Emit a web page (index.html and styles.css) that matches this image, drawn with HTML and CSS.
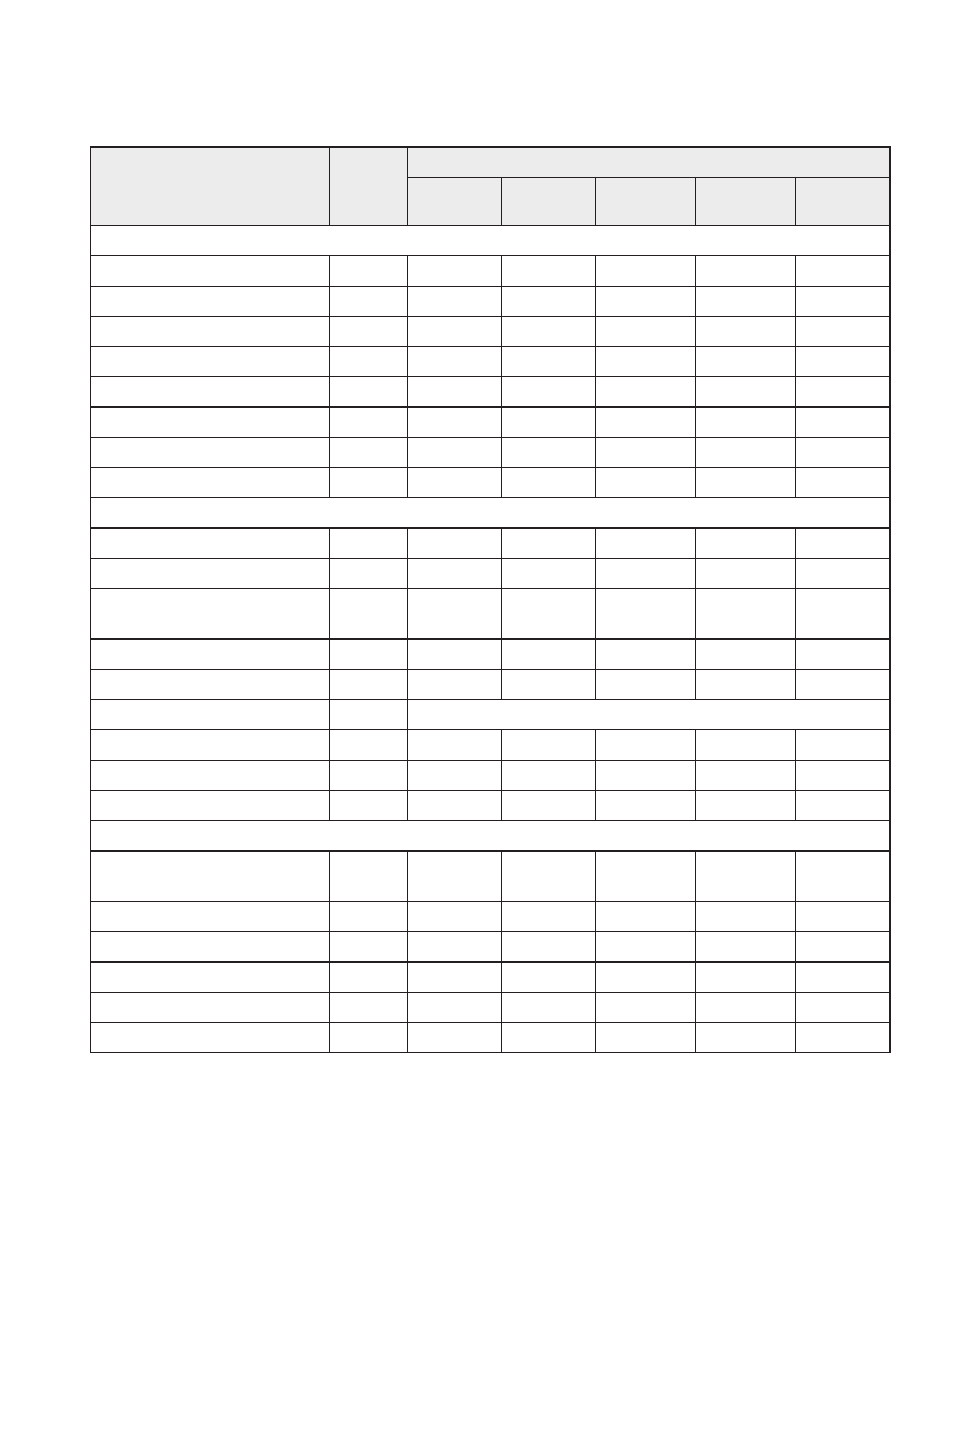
FILE: index.html
```html
<!DOCTYPE html>
<html>
<head>
<meta charset="utf-8">
<link rel="stylesheet" href="styles.css">
</head>
<body>
<div class="sheet">
  <div class="head">
    <div class="cell hc1"></div>
    <div class="cell hc2"></div>
    <div class="cell hgroup"></div>
    <div class="cell"></div>
    <div class="cell"></div>
    <div class="cell"></div>
    <div class="cell"></div>
    <div class="cell last"></div>
  </div>

  <div class="row sec h30"><div class="cell span"></div></div>
  <div class="row h31"><div class="cell"></div><div class="cell"></div><div class="cell"></div><div class="cell"></div><div class="cell"></div><div class="cell"></div><div class="cell last"></div></div>
  <div class="row h30"><div class="cell"></div><div class="cell"></div><div class="cell"></div><div class="cell"></div><div class="cell"></div><div class="cell"></div><div class="cell last"></div></div>
  <div class="row h30"><div class="cell"></div><div class="cell"></div><div class="cell"></div><div class="cell"></div><div class="cell"></div><div class="cell"></div><div class="cell last"></div></div>
  <div class="row h30"><div class="cell"></div><div class="cell"></div><div class="cell"></div><div class="cell"></div><div class="cell"></div><div class="cell"></div><div class="cell last"></div></div>
  <div class="row h31 thick"><div class="cell"></div><div class="cell"></div><div class="cell"></div><div class="cell"></div><div class="cell"></div><div class="cell"></div><div class="cell last"></div></div>
  <div class="row h30"><div class="cell"></div><div class="cell"></div><div class="cell"></div><div class="cell"></div><div class="cell"></div><div class="cell"></div><div class="cell last"></div></div>
  <div class="row h30"><div class="cell"></div><div class="cell"></div><div class="cell"></div><div class="cell"></div><div class="cell"></div><div class="cell"></div><div class="cell last"></div></div>
  <div class="row h30"><div class="cell"></div><div class="cell"></div><div class="cell"></div><div class="cell"></div><div class="cell"></div><div class="cell"></div><div class="cell last"></div></div>

  <div class="row sec h31 thick"><div class="cell span"></div></div>
  <div class="row h30"><div class="cell"></div><div class="cell"></div><div class="cell"></div><div class="cell"></div><div class="cell"></div><div class="cell"></div><div class="cell last"></div></div>
  <div class="row h30"><div class="cell"></div><div class="cell"></div><div class="cell"></div><div class="cell"></div><div class="cell"></div><div class="cell"></div><div class="cell last"></div></div>
  <div class="row h51 thick"><div class="cell"></div><div class="cell"></div><div class="cell"></div><div class="cell"></div><div class="cell"></div><div class="cell"></div><div class="cell last"></div></div>
  <div class="row h30"><div class="cell"></div><div class="cell"></div><div class="cell"></div><div class="cell"></div><div class="cell"></div><div class="cell"></div><div class="cell last"></div></div>
  <div class="row h30"><div class="cell"></div><div class="cell"></div><div class="cell"></div><div class="cell"></div><div class="cell"></div><div class="cell"></div><div class="cell last"></div></div>
  <div class="row h30"><div class="cell"></div><div class="cell"></div><div class="cell rest"></div></div>
  <div class="row h31"><div class="cell"></div><div class="cell"></div><div class="cell"></div><div class="cell"></div><div class="cell"></div><div class="cell"></div><div class="cell last"></div></div>
  <div class="row h30"><div class="cell"></div><div class="cell"></div><div class="cell"></div><div class="cell"></div><div class="cell"></div><div class="cell"></div><div class="cell last"></div></div>
  <div class="row h30"><div class="cell"></div><div class="cell"></div><div class="cell"></div><div class="cell"></div><div class="cell"></div><div class="cell"></div><div class="cell last"></div></div>

  <div class="row sec h31 thick"><div class="cell span"></div></div>
  <div class="row h50"><div class="cell"></div><div class="cell"></div><div class="cell"></div><div class="cell"></div><div class="cell"></div><div class="cell"></div><div class="cell last"></div></div>
  <div class="row h30"><div class="cell"></div><div class="cell"></div><div class="cell"></div><div class="cell"></div><div class="cell"></div><div class="cell"></div><div class="cell last"></div></div>
  <div class="row h31 thick"><div class="cell"></div><div class="cell"></div><div class="cell"></div><div class="cell"></div><div class="cell"></div><div class="cell"></div><div class="cell last"></div></div>
  <div class="row h30"><div class="cell"></div><div class="cell"></div><div class="cell"></div><div class="cell"></div><div class="cell"></div><div class="cell"></div><div class="cell last"></div></div>
  <div class="row h30"><div class="cell"></div><div class="cell"></div><div class="cell"></div><div class="cell"></div><div class="cell"></div><div class="cell"></div><div class="cell last"></div></div>
  <div class="row h30"><div class="cell"></div><div class="cell"></div><div class="cell"></div><div class="cell"></div><div class="cell"></div><div class="cell"></div><div class="cell last"></div></div>
</div>
</body>
</html>
```

FILE: styles.css
```css
html, body {
  margin: 0;
  padding: 0;
  background: #ffffff;
  font-family: "Liberation Sans", Arial, sans-serif;
}

.sheet {
  box-sizing: border-box;
  width: 801px;
  margin: 146px 0 0 90px;
  border-top: 2px solid #231f20;
  border-left: 1px solid #231f20;
  border-right: 2px solid #231f20;
}

.head,
.row {
  display: grid;
  grid-template-columns: 239px 78px 94px 94px 100px 100px 93px;
}

.head {
  grid-template-rows: 30px 48px;
  background: #ececec;
}

.cell {
  box-sizing: border-box;
  border-right: 1px solid #231f20;
  border-bottom: 1px solid #231f20;
}

.cell.last {
  border-right: none;
}

.hc1 {
  grid-column: 1;
  grid-row: 1 / 3;
}

.hc2 {
  grid-column: 2;
  grid-row: 1 / 3;
}

.hgroup {
  grid-column: 3 / -1;
  grid-row: 1;
  border-right: none;
}

.span {
  grid-column: 1 / -1;
  border-right: none;
}

.rest {
  grid-column: 3 / -1;
  border-right: none;
}

.thick .cell {
  border-bottom-width: 2px;
}

.h30 { height: 30px; }
.h31 { height: 31px; }
.h50 { height: 50px; }
.h51 { height: 51px; }
```
